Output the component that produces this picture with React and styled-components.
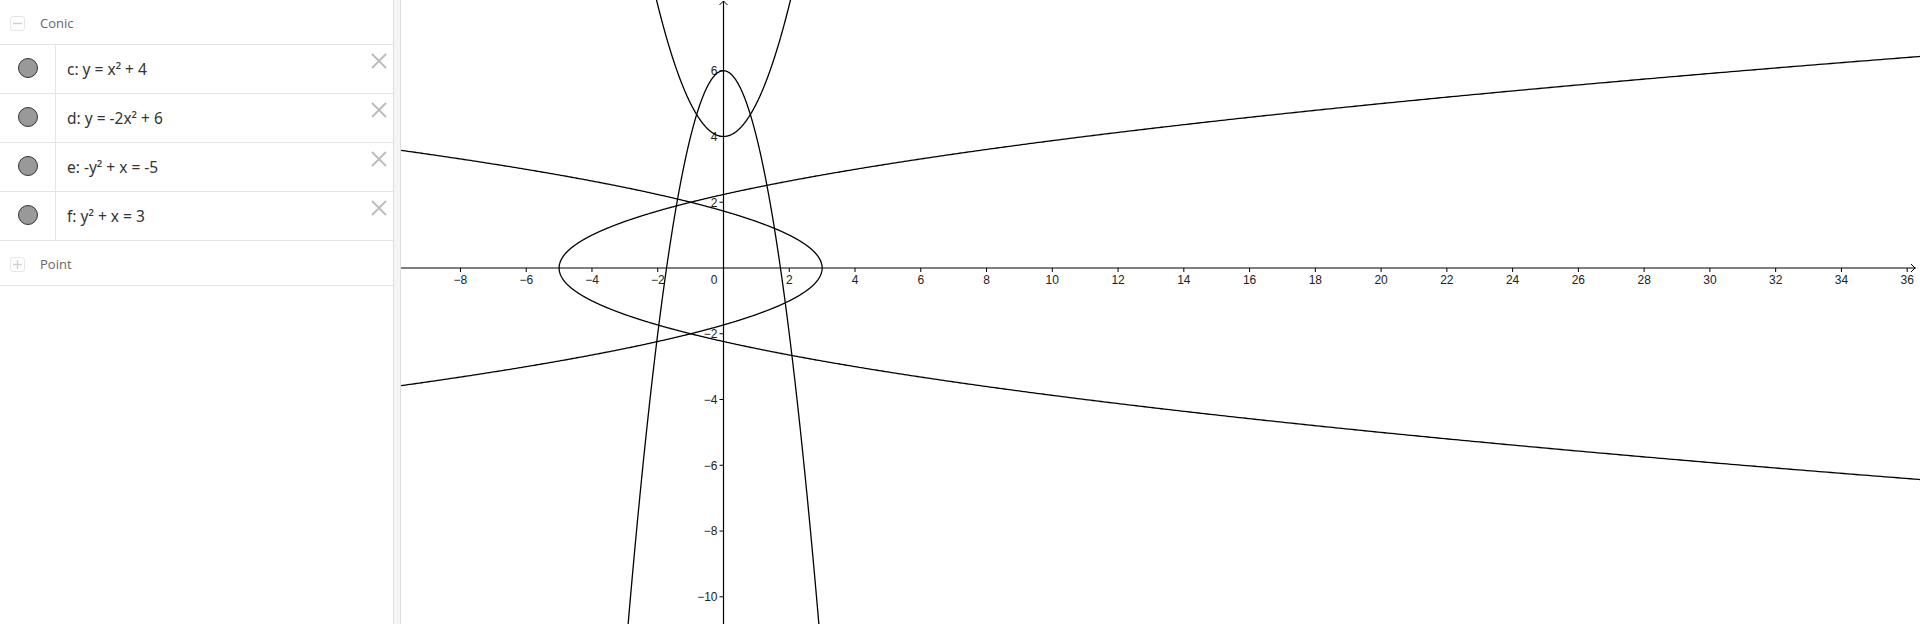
import styled, {createGlobalStyle} from "styled-components";

const GlobalStyle = createGlobalStyle`
    html, body {
    margin: 0;
    padding: 0;
    background: #fff;
    }
    body {
    font-family: "Open Sans", "Noto Sans", sans-serif;
    overflow: hidden;
    }
`;

const conics = [
    {id: "c", text: <>c: y = x² + 4</>},
    {id: "d", text: <>d: y = -2x² + 6</>},
    {id: "e", text: <>e: -y² + x = -5</>},
    {id: "f", text: <>f: y² + x = 3</>},
];

// graph window
const W = 1519;
const H = 624;
const OX = 322.5;
const OY = 268;
const S = 32.88;

const px = (x) => OX + x * S;
const py = (y) => OY - y * S;

function curve(from, to, step, fn) {
    const pts = [];
    for (let t = from; t <= to + 1e-9; t += step) {
        const [x, y] = fn(t);
        pts.push(`${px(x).toFixed(2)},${py(y).toFixed(2)}`);
    }
    return "M" + pts.join("L");
}

const paths = [
    curve(-2.3, 2.3, 0.01, (x) => [x, x * x + 4]),
    curve(-3.1, 3.1, 0.01, (x) => [x, -2 * x * x + 6]),
    curve(-6.6, 6.6, 0.01, (y) => [y * y - 5, y]),
    curve(-3.8, 3.8, 0.01, (y) => [3 - y * y, y]),
];

const fmt = (n) => (n < 0 ? "\u2212" + Math.abs(n) : String(n));

const xTicks = [];
for (let k = -8; k <= 36; k += 2) if (k !== 0) xTicks.push(k);
const yTicks = [6, 4, 2, -2, -4, -6, -8, -10];

function ToggleBox({open}) {
    return (
        <Styled.Toggle>
            <svg width="9" height="9" viewBox="0 0 9 9">
                <line x1="0" y1="4.5" x2="9" y2="4.5" stroke="#d0d0d0" strokeWidth="1.4"/>
                {!open && <line x1="4.5" y1="0" x2="4.5" y2="9" stroke="#d0d0d0" strokeWidth="1.4"/>}
            </svg>
        </Styled.Toggle>
    );
}

function Graph() {
    return (
        <Styled.Graph>
            <svg width={W} height={H} viewBox={`0 0 ${W} ${H}`}>
                <g stroke="#000" strokeWidth="1.2" fill="none">
                    <line x1="0" y1={OY} x2={W - 4} y2={OY}/>
                    <line x1={OX} y1="1" x2={OX} y2={H}/>
                    <polyline points={`${W - 9},${OY - 4} ${W - 5},${OY} ${W - 9},${OY + 4}`} strokeWidth="1"/>
                    <polyline points={`${OX - 4},5 ${OX},1 ${OX + 4},5`} strokeWidth="1"/>
                    {xTicks.map((k) => (
                        <line key={k} x1={px(k)} y1={OY} x2={px(k)} y2={OY + 4} strokeWidth="1"/>
                    ))}
                    {yTicks.map((k) => (
                        <line key={k} x1={OX - 4} y1={py(k)} x2={OX} y2={py(k)} strokeWidth="1"/>
                    ))}
                </g>
                <g fontFamily='"Liberation Sans", Arial, sans-serif' fontSize="12" fill="#222">
                    {xTicks.map((k) => (
                        <text key={k} x={px(k)} y={OY + 16} textAnchor="middle">{fmt(k)}</text>
                    ))}
                    {yTicks.map((k) => (
                        <text key={k} x={OX - 6} y={py(k) + 4.3} textAnchor="end">{fmt(k)}</text>
                    ))}
                    <text x={OX - 6} y={OY + 16} textAnchor="end">0</text>
                </g>
                <g stroke="#000" strokeWidth="1.3" fill="none">
                    {paths.map((d, i) => <path key={i} d={d}/>)}
                </g>
            </svg>
        </Styled.Graph>
    );
}

function App() {
    return (
        <Styled.Root>
            <GlobalStyle/>
            <Styled.Panel>
                <Styled.GroupHeader>
                    <ToggleBox open/>
                    <span>Conic</span>
                </Styled.GroupHeader>
                {conics.map((c) => (
                    <Styled.Row key={c.id}>
                        <Styled.MarbleCell>
                            <Styled.Marble/>
                        </Styled.MarbleCell>
                        <Styled.Formula>{c.text}</Styled.Formula>
                        <Styled.Close>
                            <svg width="16" height="16" viewBox="0 0 16 16">
                                <path d="M1 1L15 15M15 1L1 15" stroke="#bbb" strokeWidth="1.8"/>
                            </svg>
                        </Styled.Close>
                    </Styled.Row>
                ))}
                <Styled.GroupHeader>
                    <ToggleBox/>
                    <span>Point</span>
                </Styled.GroupHeader>
            </Styled.Panel>
            <Styled.Splitter/>
            <Graph/>
        </Styled.Root>
    );
}

export default App;

const Styled = {
    Root: styled.div`
    display: flex;
    width: 1920px;
    height: 624px;
    overflow: hidden;
    `,
    Panel: styled.div`
    width: 393px;
    flex-shrink: 0;
    display: flex;
    flex-direction: column;
    background: #fff;
    `,
    GroupHeader: styled.div`
    display: flex;
    align-items: center;
    gap: 15px;
    height: 44px;
    padding-left: 10px;
    border-bottom: 1px solid #e4e4e4;
    
    & > span {
    font-size: 13px;
    color: #666;
    margin-top: 2px;
    }
    `,
    Toggle: styled.div`
    display: flex;
    align-items: center;
    justify-content: center;
    width: 13px;
    height: 13px;
    border: 1px solid #e6e6e6;
    border-radius: 3px;
    margin-top: 2px;
    `,
    Row: styled.div`
    display: flex;
    height: 48px;
    border-bottom: 1px solid #e4e4e4;
    `,
    MarbleCell: styled.div`
    display: flex;
    align-items: center;
    justify-content: center;
    width: 55px;
    border-right: 1px solid #e4e4e4;
    `,
    Marble: styled.div`
    width: 18px;
    height: 18px;
    border-radius: 50%;
    background: #999;
    border: 1px solid #333;
    margin-top: -2px;
    `,
    Formula: styled.div`
    flex: 1;
    display: flex;
    align-items: center;
    padding-left: 11px;
    font-family: "Noto Sans", "Open Sans", sans-serif;
    font-size: 15.5px;
    color: #333;
    `,
    Close: styled.div`
    align-self: flex-start;
    margin: 7px 6px 0 0;
    width: 16px;
    height: 16px;
    `,
    Splitter: styled.div`
    width: 6px;
    flex-shrink: 0;
    background: #f5f5f5;
    border-left: 1px solid #dedede;
    border-right: 1px solid #dedede;
    `,
    Graph: styled.div`
    flex: 1;
    overflow: hidden;
    background: #fff;
    
    & > svg {
    display: block;
    }
    `,
}
